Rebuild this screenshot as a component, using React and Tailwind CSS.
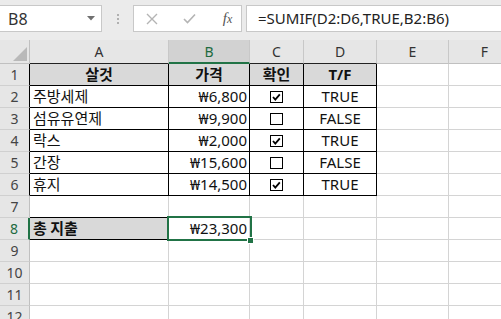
import React from "react";

const FONT = "font-['Noto_Sans','Noto_Sans_CJK_KR',sans-serif]";
const KFONT = "font-['Noto_Sans_CJK_KR','Noto_Sans',sans-serif]";

function Check({ on }) {
  return (
    <div className="w-[13px] h-[12px] border border-black bg-white flex items-center justify-center">
      {on && (
        <svg width="11" height="10" viewBox="0 0 11 10">
          <polyline points="2,5 4.3,7.6 8.8,2.4" fill="none" stroke="black" strokeWidth="1.8" />
        </svg>
      )}
    </div>
  );
}

function RowHead({ n, cls }) {
  return (
    <div className={"h-[22px] bg-[#e6e6e6] border-b border-b-[#d0d0d0] flex items-center justify-center text-[14px] " + cls}>
      {n}
    </div>
  );
}

const items = [
  ["주방세제", "₩6,800", true],
  ["섬유유연제", "₩9,900", false],
  ["락스", "₩2,000", true],
  ["간장", "₩15,600", false],
  ["휴지", "₩14,500", true],
];

export default function App() {
  return (
    <div className={"w-[501px] h-[319px] overflow-hidden bg-white text-[#111] " + FONT}>
      {/* formula bar */}
      <div className="h-[40px] bg-[#ebebeb] flex items-start pt-[5px]">
        <div className="w-[102px] h-[27px] bg-white border border-[#c8c8c8] border-l-0 flex items-center justify-between pl-[8px] pr-[6px]">
          <span className="text-[16px] text-[#333]">B8</span>
          <svg width="8" height="5" viewBox="0 0 8 5"><polygon points="0,0 8,0 4,4.5" fill="#707070" /></svg>
        </div>
        <div className="w-[31px] h-[27px] flex flex-col items-center justify-center gap-[2px]">
          <div className="w-[2px] h-[2px] bg-[#b0b0b0]" />
          <div className="w-[2px] h-[2px] bg-[#b0b0b0]" />
          <div className="w-[2px] h-[2px] bg-[#b0b0b0]" />
        </div>
        <div className="w-[109px] h-[27px] bg-white border border-[#c8c8c8] flex items-center">
          <div className="w-[36px] flex justify-center">
            <svg width="12" height="12" viewBox="0 0 12 12"><path d="M1,1 L11,11 M11,1 L1,11" stroke="#b4b4b4" strokeWidth="1.4" /></svg>
          </div>
          <div className="w-[38px] flex justify-center">
            <svg width="13" height="11" viewBox="0 0 13 11"><path d="M1,6 L4.5,9.5 L12,1.5" fill="none" stroke="#b4b4b4" strokeWidth="1.6" /></svg>
          </div>
          <div className="flex-1 flex justify-center pl-[6px]">
            <span className="font-['Liberation_Serif',serif] italic text-[15px] text-[#555]">f<span className="text-[12px]">x</span></span>
          </div>
        </div>
        <div className="w-[4px]" />
        <div className="flex-1 h-[27px] bg-white border border-[#c8c8c8] border-r-0 flex items-center pl-[11px]">
          <span className="text-[15px] text-[#222]">=SUMIF(D2:D6,TRUE,B2:B6)</span>
        </div>
      </div>

      {/* grid */}
      <div className="grid grid-cols-[30px_139px_81px_54px_73px_72px_72px] text-[15px]">
        {/* header row */}
        <div className="h-[24px] bg-[#e6e6e6] border-r border-b border-[#c0c0c0] relative">
          <svg className="absolute left-[13px] top-[7px]" width="14" height="14" viewBox="0 0 14 14"><polygon points="14,0 14,14 0,14" fill="#b9b9b9" /></svg>
        </div>
        <div className="h-[24px] bg-[#e6e6e6] border-r border-r-[#c8c8c8] border-b border-b-[#222] flex items-center justify-center text-[14px] text-[#333]">A</div>
        <div className="h-[24px] bg-[#d2d2d2] border-r border-r-[#c8c8c8] border-b-2 border-b-[#217346] flex items-center justify-center text-[14px] text-[#1e6b40]">B</div>
        <div className="h-[24px] bg-[#e6e6e6] border-r border-r-[#c8c8c8] border-b border-b-[#222] flex items-center justify-center text-[14px] text-[#333]">C</div>
        <div className="h-[24px] bg-[#e6e6e6] border-r border-r-[#c8c8c8] border-b border-b-[#222] flex items-center justify-center text-[14px] text-[#333]">D</div>
        <div className="h-[24px] bg-[#e6e6e6] border-r border-r-[#c8c8c8] border-b border-b-[#c0c0c0] flex items-center justify-center text-[14px] text-[#333]">E</div>
        <div className="h-[24px] bg-[#e6e6e6] border-r border-r-[#c8c8c8] border-b border-b-[#c0c0c0] flex items-center justify-center text-[14px] text-[#333]">F</div>

        {/* row 1 */}
        <RowHead n="1" cls="border-r border-r-black text-[#444]" />
        <div className={"h-[22px] bg-[#d9d9d9] border-r border-b border-black flex items-center justify-center font-bold " + KFONT}>살것</div>
        <div className={"h-[22px] bg-[#d9d9d9] border-r border-b border-black flex items-center justify-center font-bold " + KFONT}>가격</div>
        <div className={"h-[22px] bg-[#d9d9d9] border-r border-b border-black flex items-center justify-center font-bold " + KFONT}>확인</div>
        <div className="h-[22px] bg-[#d9d9d9] border-r border-b border-black flex items-center justify-center font-bold">T/F</div>
        <div className="h-[22px] border-r border-b border-[#d4d4d4]" />
        <div className="h-[22px] border-r border-b border-[#d4d4d4]" />

        {items.map(([name, price, on], i) => (
          <React.Fragment key={i}>
            <RowHead n={String(i + 2)} cls="border-r border-r-black text-[#444]" />
            <div className={"h-[22px] border-r border-b border-black flex items-center pl-[3px] " + KFONT}>{name}</div>
            <div className="h-[22px] border-r border-b border-black flex items-center justify-end pr-[2px]">{price}</div>
            <div className="h-[22px] border-r border-b border-black flex items-center justify-center"><Check on={on} /></div>
            <div className="h-[22px] border-r border-b border-black flex items-center justify-center">{on ? "TRUE" : "FALSE"}</div>
            <div className="h-[22px] border-r border-b border-[#d4d4d4]" />
            <div className="h-[22px] border-r border-b border-[#d4d4d4]" />
          </React.Fragment>
        ))}

        {/* row 7 */}
        <RowHead n="7" cls="border-r border-r-[#c0c0c0] text-[#444]" />
        <div className="h-[22px] border-r border-r-[#d4d4d4] border-b border-b-black" />
        <div className="h-[22px] border-r border-b border-[#d4d4d4]" />
        <div className="h-[22px] border-r border-b border-[#d4d4d4]" />
        <div className="h-[22px] border-r border-b border-[#d4d4d4]" />
        <div className="h-[22px] border-r border-b border-[#d4d4d4]" />
        <div className="h-[22px] border-r border-b border-[#d4d4d4]" />

        {/* row 8 */}
        <RowHead n="8" cls="bg-[#d2d2d2] border-r-2 border-r-[#217346] text-[#1e6b40]" />
        <div className={"h-[22px] bg-[#d9d9d9] border-r border-r-[#d4d4d4] border-b border-b-black flex items-center pl-[3px] font-bold " + KFONT}>총 지출</div>
        <div className="h-[22px] border-r border-b border-[#d4d4d4] flex items-center justify-end pr-[2px] relative">
          ₩23,300
          <div className="absolute -left-[2px] -top-[2px] w-[85px] h-[25px] border-2 border-[#217346]" />
          <div className="absolute left-[78px] top-[19px] w-[7px] h-[7px] bg-[#217346] border border-white" />
        </div>
        <div className="h-[22px] border-r border-b border-[#d4d4d4]" />
        <div className="h-[22px] border-r border-b border-[#d4d4d4]" />
        <div className="h-[22px] border-r border-b border-[#d4d4d4]" />
        <div className="h-[22px] border-r border-b border-[#d4d4d4]" />

        {["9", "10", "11", "12"].map((n) => (
          <React.Fragment key={n}>
            <RowHead n={n} cls="border-r border-r-[#c0c0c0] text-[#444]" />
            <div className="h-[22px] border-r border-b border-[#d4d4d4]" />
            <div className="h-[22px] border-r border-b border-[#d4d4d4]" />
            <div className="h-[22px] border-r border-b border-[#d4d4d4]" />
            <div className="h-[22px] border-r border-b border-[#d4d4d4]" />
            <div className="h-[22px] border-r border-b border-[#d4d4d4]" />
            <div className="h-[22px] border-r border-b border-[#d4d4d4]" />
          </React.Fragment>
        ))}
      </div>
    </div>
  );
}
